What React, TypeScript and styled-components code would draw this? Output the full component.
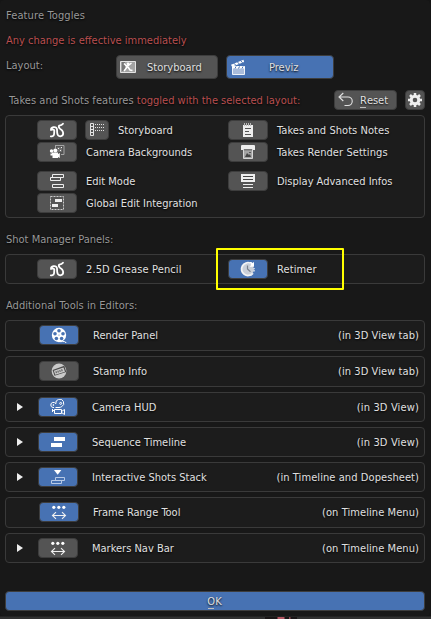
import React from "react";
import styled, { createGlobalStyle } from "styled-components";

const Global = createGlobalStyle`
  * { box-sizing: border-box; }
  body { margin: 0; background: #303030; overflow: hidden; }
`;

const Screen = styled.div`
  position: relative;
  width: 431px;
  height: 619px;
  background: linear-gradient(#151515 0 616px, #303030 617px);
  font: 11px/14px "DejaVu Sans Condensed", "DejaVu Sans", sans-serif;
  font-stretch: condensed;
  color: #e0e0e0;
  text-shadow: 0 1px 2px #000;
  white-space: nowrap;
`;

const Dialog = styled.main`
  display: flex;
  flex-direction: column;
  width: 430px;
  height: 616px;
  padding: 8px 5px 5px;
  background: #181818;
  border-radius: 4px;
`;

const Text = styled.span<{ $ls?: number; $tone?: "dim" | "red" }>`
  padding-top: 2px;
  letter-spacing: ${(p) => (p.$ls ? `${p.$ls}px` : "normal")};
  color: ${(p) => (p.$tone === "dim" ? "#989898" : p.$tone === "red" ? "#b94f50" : "#e0e0e0")};
`;

const LayoutLabel = styled(Text)`
  padding: 0 0 2px;
`;

const Line = styled.div<{ $top?: number; $inset?: number; $h?: number }>`
  display: flex;
  align-items: center;
  flex: none;
  height: ${(p) => p.$h ?? 14}px;
  margin-top: ${(p) => p.$top ?? 0}px;
  padding-left: ${(p) => p.$inset ?? 1}px;
`;

const LayoutLine = styled(Line)`
  padding-right: 91px;
`;

const Button = styled.button<{ $w: number; $h?: number; $on?: boolean; $ml?: number }>`
  display: flex;
  align-items: center;
  justify-content: center;
  flex: none;
  width: ${(p) => p.$w}px;
  height: ${(p) => p.$h ?? 20}px;
  margin: 0 0 0 ${(p) => p.$ml ?? 0}px;
  padding: 0;
  font: inherit;
  text-shadow: inherit;
  border: 1px solid #3d3d3d;
  border-radius: 4px;
  background: ${(p) => (p.$on ? "#4772b3" : "#545454")};
`;

const LabeledButton = styled(Button)<{ $pad: number; $gap: number }>`
  justify-content: flex-start;
  padding-left: ${(p) => p.$pad}px;
  gap: ${(p) => p.$gap}px;
`;

const Confirm = styled(Button)`
  margin-top: 28px;
  padding-right: 1px;
`;

const Spacer = styled.div`
  flex: 1;
`;

const Hotkey = styled.span`
  display: inline-block;
  height: 14px;
  background: linear-gradient(#bdbdbd, #bdbdbd) center bottom / 6px 1px no-repeat;
`;

const Box = styled.section<{ $top: number; $h: number }>`
  display: flex;
  flex: none;
  width: 420px;
  height: ${(p) => p.$h}px;
  margin-top: ${(p) => p.$top}px;
  border: 1px solid #3a3a3a;
  border-radius: 4px;
  background: #1c1c1c;
`;

const Column = styled.div<{ $w: number; $inset?: number }>`
  display: flex;
  flex-direction: column;
  width: ${(p) => p.$w}px;
  padding: 4px 0 0 ${(p) => p.$inset ?? 0}px;
`;

const Feature = styled.div<{ $top?: number }>`
  display: flex;
  align-items: center;
  height: 20px;
  margin-top: ${(p) => p.$top ?? 0}px;
`;

const FeatureLabel = styled(Text)`
  margin-left: 9px;
`;

const ToolRow = styled(Box)<{ $inset: number }>`
  align-items: flex-start;
  padding: 4px 5px 0 ${(p) => p.$inset}px;
`;

const ToolLabel = styled(Text)`
  margin: 2px 0 0 14px;
`;

const ToolPlace = styled(Text)`
  margin: 2px 0 0 auto;
`;

const Arrow = styled.svg`
  width: 6px;
  height: 8px;
  margin: 6px 15px 0 0;
`;

const Highlight = styled.div`
  position: absolute;
  left: 216px;
  top: 248px;
  width: 128px;
  height: 42px;
  border: 2px solid #ffff00;
  border-radius: 1px;
`;

const Glimpse = styled.div`
  position: absolute;
  left: 265px;
  top: 617px;
  width: 32px;
  height: 2px;
  background: linear-gradient(90deg, #191516 0 12px, #b35561 13px 19px, #191516 20px 24px, #8d4651 24px 25px, #191516 26px);
`;

const art: Record<string, React.ReactNode> = {
  grease: (
    <g fill="none" stroke="#fff" strokeWidth="1.8" strokeLinecap="round" strokeLinejoin="round">
      <path d="M1.8 14.3H3Q4.9 14.2 5.1 12L5.3 8.5Q5 7.3 3.6 7.4L2 8Q1.8 5.6 4.4 5.2Q7.6 4.8 8 7.4L8.2 11Q8.6 14.3 11.2 14.3Q14.3 14 14.2 11Q13.8 8 10.9 6.7Q9.2 5.2 10.2 3.6Q12.8 3.4 14 1.8" />
    </g>
  ),
  grid: (
    <g fill="none" stroke="#e2e2e2">
      <path d="M1.5 1.5h3v12h-3zM1.5 4.5h3M1.5 7.5h3M1.5 10.5h3" />
      <path d="M6 2.5h10M6 5.5h10M6 8.5h10" strokeDasharray="1 1" />
    </g>
  ),
  cameraBg: (
    <g>
      <path d="M6 1.5h9v9h-3M6.5 1.5v3" fill="none" stroke="#a4a4a4" />
      <path d="M8 3h5v5H8z" fill="#707070" />
      <path d="M9 4h1v1H9zM12 3h1v1h-1zM11 6h1v1h-1z" fill="#eee" />
      <circle cx="2.5" cy="7" r="1.7" fill="#fff" />
      <circle cx="6.3" cy="6.5" r="2" fill="#fff" />
      <path d="M3 8.5h6v1.5l1.8-1v5L9 13v1H3.5v-2.5H1.5v-2H3z" fill="#fff" />
    </g>
  ),
  edit: <path d="M3.5 1.5h11v3h-11zM1.5 4.5h10v3h-10zM3.5 11.5h11v3h-11z" fill="none" stroke="#eee" />,
  global: (
    <g>
      <path d="M1.5 1.5h13v13h-13z" fill="none" stroke="#ccc" strokeDasharray="2 1" />
      <path d="M6 4h7v3H6zM3 9h6v3H3z" fill="#eee" />
    </g>
  ),
  notes: (
    <g>
      <path d="M3 3h10v12H3z" fill="#eee" />
      <path d="M4.5 1v3M6.5 1v3M8.5 1v3M10.5 1v3" stroke="#bbb" />
      <path d="M5 6.5h6M5 9.5h4M5 12.5h6" stroke="#555" />
    </g>
  ),
  renderOut: (
    <g>
      <path d="M1 1.8q0-.8 1-.8h12q1 0 1 .8V6H1z" fill="#eee" />
      <path d="M3.5 5.5h9v9h-9z" fill="#a4a4a4" stroke="#d6d6d6" />
      <path d="M4 5h8v1.5H4z" fill="#777" />
      <path d="M5 13l2-4 2 2 1-1 1 3z" fill="#444" />
      <path d="M9 8h2v1H9z" fill="#555" />
    </g>
  ),
  info: (
    <g>
      <path d="M1 1h14v8H1z" fill="#eee" />
      <path d="M3 3.5h10M3 6.5h10" stroke="#444" />
      <path d="M3 11.5h10M3 14.5h10" stroke="#eee" />
    </g>
  ),
  retimer: (
    <g>
      <circle cx="7.8" cy="8.3" r="6" fill="#c9cfd9" />
      <path d="M10.6 2.3A6.4 6.4 0 1 0 12.8 12.3" fill="none" stroke="#f4f4f4" strokeWidth="1.8" />
      <path d="M9.8 1h1.6l1 1 1.6-1v4.8H9.4l1.6-1.6z" fill="#fff" />
      <path d="M14 7v4M13 12l-2 2" fill="none" stroke="#dde3ed" strokeWidth="1.5" strokeDasharray="1.3 .8" />
      <path d="M7.5 4.5V8l3 2.8" fill="none" stroke="#7b828e" strokeWidth="1.2" />
    </g>
  ),
  reel: (
    <g>
      <circle cx="8" cy="8" r="7.2" fill="#fff" />
      <g fill="#4772b3">
        <circle cx="8" cy="3.7" r="1.8" /><circle cx="12" cy="6.7" r="1.8" /><circle cx="10.6" cy="11.5" r="1.8" />
        <circle cx="5.4" cy="11.5" r="1.8" /><circle cx="4" cy="6.7" r="1.8" /><circle cx="8" cy="8" r=".6" />
      </g>
      <path d="M9 14.7q3-.2 4.5-.1l2 1.4" fill="none" stroke="#fff" />
    </g>
  ),
  stamp: (
    <g>
      <circle cx="8" cy="8" r="7.4" fill="#cacaca" />
      <path d="M1.6 6.9l11.7-4.2 2 6.3-11.8 3.8z" fill="#4c4c4c" />
      <path d="M2.8 7.8l9.7-3.3 1.5 4.2-9.7 3.1z" fill="#cacaca" />
      <path d="M4.6 9.4l7.4-2.5" stroke="#6b6b6b" strokeWidth="2" strokeDasharray="1.3 .7" />
    </g>
  ),
  hud: (
    <g fill="none" stroke="#fff">
      <path d="M4 8.5H3A2.6 2.6 0 0 1 2.8 3.4Q4.8 3.2 5.8 4.8A4 4 0 1 1 11.8 7.6Q10.5 8.5 9 8.5H5.5" />
      <circle cx="10.7" cy="4.4" r="1" /><circle cx="3.4" cy="6" r=".5" />
      <path d="M4.5 10.5h7v4h-7zM2 11.5h2M2.5 10v3M11.5 12.5l3-2v5l-3-2" />
    </g>
  ),
  sequence: <path d="M4 3h11v4H4zM1 9h11v4H1z" fill="#fff" />,
  stack: (
    <g>
      <path d="M4 1h7.4L7.7 5.8z" fill="#fff" />
      <path d="M5.5 8.5h9v3h-9zM1.5 11.5h10v3h-10z" fill="none" stroke="#b8cae6" />
    </g>
  ),
  range: (
    <g>
      <g fill="#fff"><circle cx="2.8" cy="3.3" r="1.6" /><circle cx="7.8" cy="3.3" r="1.6" /><circle cx="12.8" cy="3.3" r="1.6" /></g>
      <path d="M1.5 11.5h13M5 8.2l-3.5 3.3L5 14.8M11 8.2l3.5 3.3-3.5 3.3" fill="none" stroke="#f0f0f0" strokeWidth="1.1" />
    </g>
  ),
  board: (
    <g>
      <path d="M.5 2.5h15v11H.5z" fill="#a4a4a4" stroke="#e4e4e4" />
      <path d="M2 3h3v9H2z" fill="#777" />
      <path d="M4 4.5l3 3 4.5-3.5M7.5 7.5L4 12M8 8l2 3 2.5.5" fill="none" stroke="#fff" strokeWidth="1.5" />
      <circle cx="8" cy="4.8" r="1.4" fill="#fff" />
    </g>
  ),
  clapper: (
    <g>
      <path d="M2.5 7.5h12v8h-12z" fill="#a9bcdb" stroke="#eef2f8" />
      <path d="M1 5.7l12.5-5 .6 2.2L2 7.7z" fill="#fff" />
      <path d="M3.8 4.2l2 2M7.3 2.8l2 2.2M10.6 1.6l2 2.2" stroke="#4772b3" />
      <path d="M2 8.5h13" stroke="#fff" strokeWidth="2" />
      <path d="M6 7.5l-1 2M9.5 7.5l-1 2M13 7.5l-1 2" stroke="#4772b3" />
    </g>
  ),
  undo: <path d="M5.3 1L1 5l4.3 4M1.3 5H10a4.2 4.2 0 0 1 0 8.5H6.5" fill="none" stroke="#e2e2e2" strokeWidth="1.1" />,
  gear: (
    <g>
      <circle cx="8" cy="8" r="3.8" fill="none" stroke="#eee" strokeWidth="3" />
      <path d="M8 1v3M8 12v3M1 8h3M12 8h3M3 3l2 2M11 11l2 2M3 13l2-2M11 5l2-2" stroke="#eee" strokeWidth="2.5" />
    </g>
  ),
};

const Icon = ({ name }: { name: string }) => (
  <svg width="16" height="16" viewBox="0 0 16 16" aria-hidden="true">{art[name]}</svg>
);

type FeatureProps = { icon: string; label: string; ls?: number; top?: number; extra?: string; on?: boolean };
const FeatureToggle = ({ icon, label, ls, top, extra, on }: FeatureProps) => (
  <Feature $top={top}>
    <Button $w={40} $on={on}><Icon name={icon} /></Button>
    {extra && <Button $w={24} $ml={8}><Icon name={extra} /></Button>}
    <FeatureLabel $ls={ls}>{label}</FeatureLabel>
  </Feature>
);

const tools = [
  { name: "Render Panel", place: "(in 3D View tab)", icon: "reel", on: true, top: 8, h: 31 },
  { name: "Stamp Info", place: "(in 3D View tab)", icon: "stamp", top: 5, h: 31 },
  { name: "Camera HUD", place: "(in 3D View)", icon: "hud", on: true, arrow: true, top: 5, h: 30, ls: 0.15 },
  { name: "Sequence Timeline", place: "(in 3D View)", icon: "sequence", on: true, arrow: true, top: 5, h: 30, ls: 0.15 },
  { name: "Interactive Shots Stack", place: "(in Timeline and Dopesheet)", icon: "stack", on: true, arrow: true, top: 5, h: 30 },
  { name: "Frame Range Tool", place: "(on Timeline Menu)", icon: "range", on: true, top: 5, h: 31 },
  { name: "Markers Nav Bar", place: "(on Timeline Menu)", icon: "range", arrow: true, top: 5, h: 30 },
];

export default function App() {
  return (
    <Screen>
      <Global />
      <Dialog>
        <Line><Text $tone="dim" $ls={0.12}>Feature Toggles</Text></Line>
        <Line $top={11}><Text $tone="red">Any change is effective immediately</Text></Line>
        <LayoutLine $top={8} $h={24}>
          <LayoutLabel $tone="dim">Layout:</LayoutLabel>
          <Spacer />
          <LabeledButton $w={102} $h={24} $pad={3} $gap={11}><Icon name="board" /><Text>Storyboard</Text></LabeledButton>
          <LabeledButton $w={108} $h={24} $ml={8} $on $pad={3} $gap={23}><Icon name="clapper" /><Text>Previz</Text></LabeledButton>
        </LayoutLine>
        <Line $top={11} $inset={4} $h={20}>
          <Text $tone="dim" $ls={0.05}>Takes and Shots features&nbsp;</Text>
          <Text $tone="red">toggled with the selected layout:</Text>
          <Spacer />
          <LabeledButton $w={63} $pad={3} $gap={6}><Icon name="undo" /><Text><Hotkey>R</Hotkey>eset</Text></LabeledButton>
          <Button $w={20} $ml={8}><Icon name="gear" /></Button>
        </Line>
        <Box $top={5} $h={103}>
          <Column $w={222} $inset={31}>
            <FeatureToggle icon="grease" extra="grid" label="Storyboard" />
            <FeatureToggle icon="cameraBg" label="Camera Backgrounds" top={2} />
            <FeatureToggle icon="edit" label="Edit Mode" top={9} />
            <FeatureToggle icon="global" label="Global Edit Integration" top={2} />
          </Column>
          <Column $w={190}>
            <FeatureToggle icon="notes" label="Takes and Shots Notes" ls={0.06} />
            <FeatureToggle icon="renderOut" label="Takes Render Settings" ls={0.08} top={2} />
            <FeatureToggle icon="info" label="Display Advanced Infos" top={9} />
          </Column>
        </Box>
        <Line $top={14}><Text $tone="dim">Shot Manager Panels:</Text></Line>
        <Box $top={8} $h={30}>
          <Column $w={222} $inset={31}><FeatureToggle icon="grease" label="2.5D Grease Pencil" ls={0.12} /></Column>
          <Column $w={190}><FeatureToggle icon="retimer" label="Retimer" ls={0.12} on /></Column>
        </Box>
        <Line $top={14}><Text $tone="dim" $ls={0.05}>Additional Tools in Editors:</Text></Line>
        {tools.map((t) => (
          <ToolRow key={t.name} $top={t.top} $h={t.h} $inset={t.arrow ? 11 : 33}>
            {t.arrow && <Arrow viewBox="0 0 6 8"><path d="M0 0l6 4-6 4z" fill="#eee" /></Arrow>}
            <Button $w={40} $on={t.on}><Icon name={t.icon} /></Button>
            <ToolLabel>{t.name}</ToolLabel>
            <ToolPlace $ls={t.ls ?? 0.08}>{t.place}</ToolPlace>
          </ToolRow>
        ))}
        <Confirm $w={420} $on><Text><Hotkey>O</Hotkey>K</Text></Confirm>
      </Dialog>
      <Highlight />
      <Glimpse />
    </Screen>
  );
}
